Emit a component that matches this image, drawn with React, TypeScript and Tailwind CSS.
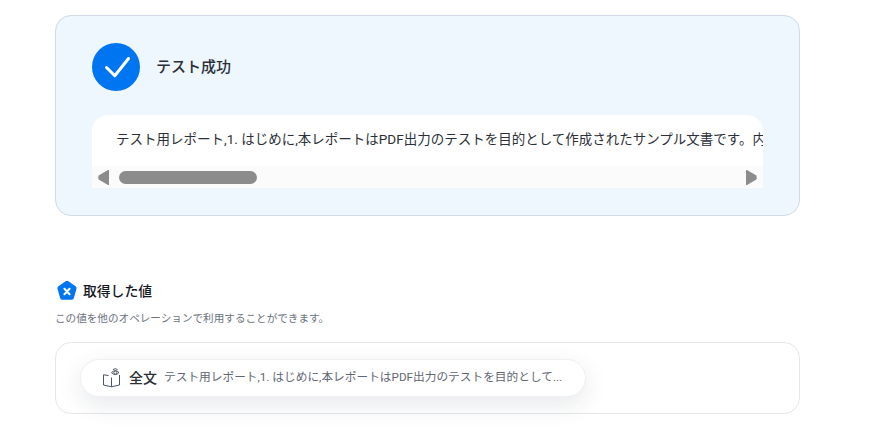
const FONT = "font-['Roboto','Noto_Sans_CJK_JP',sans-serif]";

function CheckBadge() {
  return (
    <div className="h-12 w-12 shrink-0 rounded-full bg-[#0075f2]">
      <svg width="48" height="48" viewBox="0 0 48 48" fill="none">
        <path d="M14.5 24.5L22.8 32.8L36.5 15.5" stroke="white" strokeWidth="3" strokeLinecap="round" strokeLinejoin="round" />
      </svg>
    </div>
  );
}

function ScrollBar() {
  return (
    <div className="flex h-[22px] items-center bg-[#fbfbfc] pl-[6px] pr-[6px]">
      <svg width="11" height="15" viewBox="0 0 11 15">
        <path d="M11 0V15H10L0.6 9.5Q0 7.5 0.6 5.5L10 0Z" fill="#8c8c8c" />
      </svg>
      <div className="ml-[10px] h-[13px] w-[138px] rounded-full bg-[#8c8c8c]" />
      <svg className="ml-auto" width="11" height="15" viewBox="0 0 11 15">
        <path d="M0 0V15H1L10.4 9.5Q11 7.5 10.4 5.5L1 0Z" fill="#8c8c8c" />
      </svg>
    </div>
  );
}

function ValueIcon() {
  return (
    <svg width="22" height="22" viewBox="0 0 22 22">
      <path d="M9.6 1.2Q11 0.4 12.4 1.2L19.6 6.2Q21 7.2 20.5 8.8L17.8 18.2Q17.3 19.8 15.6 19.8H6.4Q4.7 19.8 4.2 18.2L1.5 8.8Q1 7.2 2.4 6.2Z" fill="#0075f2" />
      <path d="M8.4 8.8L13.6 14.2M13.6 8.8L8.4 14.2" stroke="white" strokeWidth="2" strokeLinecap="round" />
    </svg>
  );
}

function BookEyeIcon() {
  return (
    <svg width="18" height="20" viewBox="0 0 18 20" fill="none" stroke="#4b5563" strokeWidth="1">
      <path d="M5.5 7.5L0.5 6.8V17L8.5 18.8V9.5" />
      <path d="M8.5 18.8L16.5 17V7" />
      <path d="M8.5 4.6Q12.3 0.6 16 4.6Q12.3 8.6 8.5 4.6Z" />
      <circle cx="12.3" cy="4.6" r="1.5" />
      <path d="M10 1.6Q12.3 -0.2 14.6 1.6" />
    </svg>
  );
}

export default function App() {
  return (
    <div className={`${FONT} h-[437px] w-[884px] overflow-hidden bg-white pl-[55px] pt-[15px]`}>
      <section className="h-[201px] w-[745px] rounded-[16px] border border-[#cfdbe6] bg-[#eef6fe] pl-[36px] pr-[36px] pt-[27px]">
        <div className="flex items-center gap-[16px]">
          <CheckBadge />
          <h2 className="text-[15px] font-medium text-[#2b3038]">テスト成功</h2>
        </div>
        <div className="mt-[24px] overflow-hidden rounded-t-[16px] bg-white">
          <div className="h-[51px] overflow-hidden whitespace-nowrap pl-[24px] pt-[13px] text-[13.5px] leading-[22px] text-[#2b3038]">
            テスト用レポート,1. はじめに,本レポートはPDF出力のテストを目的として作成されたサンプル文書です。内容はダミーです。
          </div>
          <ScrollBar />
        </div>
      </section>

      <div className="mt-[64px] flex items-center gap-[5px] pl-[1px]">
        <ValueIcon />
        <h3 className="text-[13.8px] font-medium leading-[22px] text-[#16181d]">取得した値</h3>
      </div>
      <p className="mt-[10px] text-[10.6px] leading-[14px] text-[#6b7280]">この値を他のオペレーションで利用することができます。</p>

      <div className="mt-[16px] flex h-[72px] w-[745px] items-center rounded-[16px] border border-[#e5e7eb] bg-white pl-[24px]">
        <div className="flex h-[38px] w-[506px] items-center rounded-full border border-[#eef0f3] bg-white pl-[22px] shadow-[0_8px_24px_rgba(30,40,60,0.10)]">
          <BookEyeIcon />
          <span className="ml-[8px] text-[14px] font-medium text-[#2b3038]">全文</span>
          <span className="ml-[7px] whitespace-nowrap text-[11.7px] text-[#5f6773]">
            テスト用レポート,1. はじめに,本レポートはPDF出力のテストを目的として...
          </span>
        </div>
      </div>
    </div>
  );
}
